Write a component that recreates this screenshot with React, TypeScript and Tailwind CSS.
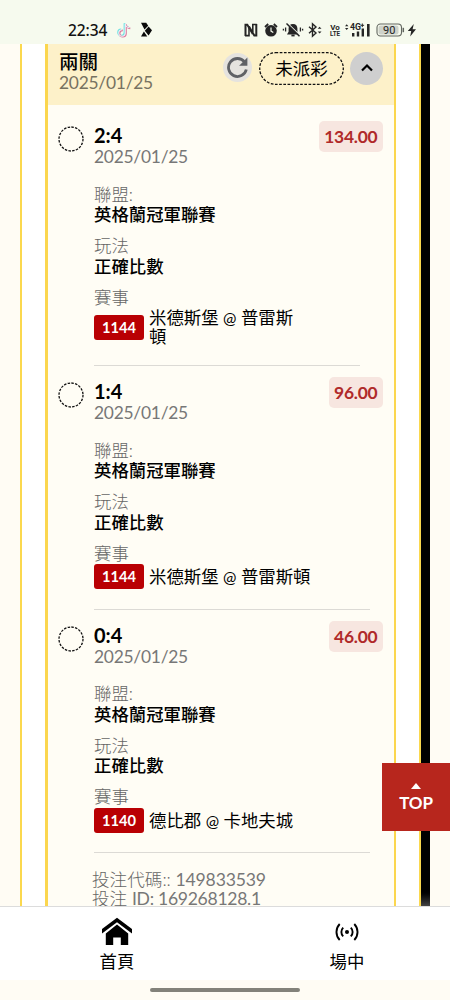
type Leg = {
  score: string;
  date: string;
  odds: string;
  league: string;
  play: string;
  matchId: string;
  home: string;
  away: string;
  wrap?: boolean;
};

const LEGS: Leg[] = [
  { score: "2:4", date: "2025/01/25", odds: "134.00", league: "英格蘭冠軍聯賽", play: "正確比數", matchId: "1144", home: "米德斯堡", away: "普雷斯頓", wrap: true },
  { score: "1:4", date: "2025/01/25", odds: "96.00", league: "英格蘭冠軍聯賽", play: "正確比數", matchId: "1144", home: "米德斯堡", away: "普雷斯頓" },
  { score: "0:4", date: "2025/01/25", odds: "46.00", league: "英格蘭冠軍聯賽", play: "正確比數", matchId: "1140", home: "德比郡", away: "卡地夫城" },
];

/** System bar: clock, running apps, radios, battery. */
function StatusBar() {
  return (
    <header className="flex h-11 shrink-0 items-start bg-[#f6faee] pt-[22px] text-[#111]">
      <span className="ml-[68px] w-[40px] font-['Noto_Sans'] text-[15.5px] leading-4 font-medium tracking-[-0.1px]">22:34</span>
      <svg className="ml-[9px]" width="15" height="16" viewBox="0 0 15 16" fill="none" strokeWidth="1.6">
        <path d="M7.4 1.2v9.2a3.200 3.200 0 1 1-3.200-3.200M7.400 1.200c.3 2.500 1.900 3.800 4.300 4" stroke="#6fe3e3" />
        <path d="M9 2.400v9.200a3.200 3.200 0 1 1-3.200-3.200M9 2.400c.3 2.500 1.900 3.800 4.300 4" stroke="#d9799c" />
        <path d="M8.200 1.800V11A3.200 3.200 0 1 1 5 7.800M8.200 1.800c.3 2.500 1.900 3.800 4.300 4" stroke="#f3eef6" strokeWidth="1.100" />
      </svg>
      <svg className="ml-[8px]" width="13" height="16" viewBox="0 0 13 16" fill="#0a0a0a">
        <path d="M1 .8h5.200l2 3-3.700 3.700zM8.600 4.400l3.400 3.800-3.400 5.400-3.800-4.800zM3.900 9.600l3.400 5H1z" />
      </svg>

      <div className="ml-[91px] flex items-start">
        <svg width="14" height="16" viewBox="0 0 14 16" fill="none" stroke="#252525" strokeWidth="2">
          <path d="M1.500 14V2.8h1.8L8.800 12M12.300 2v11.400h-2L5 4.600" />
          <path d="M1 13.600h4V6M8.800 10V2.500h4" strokeWidth="1.600" />
        </svg>
        <svg className="ml-[6px]" width="14" height="16" viewBox="0 0 14 16" fill="#252525">
          <circle cx="7" cy="8.800" r="5.800" />
          <path d="M1 5 4.200 2M13 5 9.800 2" stroke="#252525" strokeWidth="1.800" />
          <path d="M7 5.600v3.500l2.300 1.500" fill="none" stroke="#f6faee" strokeWidth="1.200" />
        </svg>
        <svg className="ml-[4px]" width="22" height="16" viewBox="0 0 22 16" fill="#252525">
          <path d="M11 2c-3 0-4.400 2-4.400 4.600v3.200L5 12.400h12l-1.600-2.600V6.600C15.400 4 14 2 11 2z" />
          <path d="M9.400 12.600h3.200v1.800H9.400z" />
          <path d="m5.700 1.500 13 12.500" stroke="#f6faee" strokeWidth="1.200" />
          <path d="m4.500 1.500 13 12.800" stroke="#252525" strokeWidth="1.500" />
          <path d="M3.600 5.500v4M1.400 6.800v1.600M18.400 5.500v4M20.600 6.800v1.600" stroke="#252525" strokeWidth="1.300" />
        </svg>
        <svg className="ml-[4px]" width="14" height="16" viewBox="0 0 14 16" fill="none" stroke="#252525" strokeWidth="1.400">
          <path d="m1 4.800 7 6.200-3.500 3.200V1.800L8 5 1 11.200" />
          <path d="m9.700 6.800 1.900-2.100 1.900 2.100zM9.700 9.400l1.900 2.100 1.900-2.100z" fill="#252525" stroke="none" />
        </svg>
        <svg className="ml-[7px]" width="12" height="16" viewBox="0 0 12 16" fill="#252525" fontFamily="Roboto" fontWeight="700" textAnchor="middle">
          <text x="6" y="7.600" fontSize="8">Vo</text>
          <text x="6" y="14.400" fontSize="8" textLength="10" lengthAdjust="spacingAndGlyphs">LTE</text>
        </svg>
        <svg className="ml-[4px]" width="27" height="16" viewBox="0 0 27 16" fill="#252525">
          <path d="m0 4.300 1.700-2 1.700 2zM0 6l1.700 2 1.700-2z" />
          <text x="5" y="8.200" fontFamily="Roboto" fontSize="9" fontWeight="700" textLength="11" lengthAdjust="spacingAndGlyphs">4G</text>
          <path d="M15.500 3.300h3.600M17.300 1.500v3.600" stroke="#252525" />
          <path d="M7 11h2.400v3.500H7zM11.800 9.500h2.400v5h-2.400zM16.600 6.500H19v8h-2.400zM22 2h2.600v12.500H22z" />
        </svg>
        <svg className="ml-[4px]" width="29" height="16" viewBox="0 0 29 16">
          <rect x="1" y="2" width="24.500" height="12" rx="3.500" fill="#f6faee" stroke="#626660" strokeWidth="1.100" />
          <rect x="2.500" y="3.500" width="20" height="9" rx="2.200" fill="#ced2ca" />
          <path d="M27.300 5.800v4.400" stroke="#626660" strokeWidth="1.500" />
          <text x="13.300" y="12" textAnchor="middle" fontFamily="Roboto" fontSize="11" fill="#252525">90</text>
        </svg>
        <svg className="ml-[2px]" width="10" height="16" viewBox="0 0 10 16" fill="#252525">
          <path d="M6.800 2 .8 9h3.400l-1 5.500L9 7.300H5.600z" />
        </svg>
      </div>
    </header>
  );
}

function BetHeader() {
  return (
    <div className="flex h-[61px] shrink-0 bg-[#fdf1c9] pl-[11px] pt-2">
      <div className="w-[164px]">
        <h1 className="text-[19.500px] leading-[20px] font-medium">兩關</h1>
        <p className="text-[17.400px] leading-[22px] tracking-[-0.250px] text-[#777261]">2025/01/25</p>
      </div>
      <button className="mt-[1px] flex size-[29px] items-center justify-center rounded-full bg-[#e5e3df]">
        <svg width="23" height="23" viewBox="0 0 23 23" fill="none">
          <path d="M18.500 5.800A9 9 0 1 0 20.300 13.500" stroke="#5f6166" strokeWidth="2.800" />
          <path d="M21.400 1.500v8.300h-8.300z" fill="#5f6166" />
        </svg>
      </button>
      <span className="relative ml-[7px] flex h-[33px] w-[85px] items-center justify-center text-[17.500px] leading-none">
        <svg className="absolute inset-0" width="85" height="33" fill="none">
          <rect x=".7" y=".7" width="83.600" height="31.600" rx="15.800" stroke="#111" strokeWidth="1.300" strokeDasharray="2.700 1.500" />
        </svg>
        未派彩
      </span>
      <button className="ml-[6px] flex size-[33px] items-center justify-center rounded-full bg-[#cfcfcf]">
        <svg className="-mt-0.5" width="14" height="10" viewBox="0 0 14 10" fill="none">
          <path d="m2 7.500 5-5 5 5" stroke="#000" strokeWidth="2.200" />
        </svg>
      </button>
    </div>
  );
}

function LegItem({ leg }: { leg: Leg }) {
  return (
    <article className={leg.wrap ? "flex h-[256px]" : "flex h-[243.500px]"}>
      <svg className="mt-[5px] ml-[10px] shrink-0" width="26" height="26" viewBox="0 0 26 26" fill="none">
        <circle cx="13" cy="13" r="12" stroke="#111" strokeWidth="1.300" strokeDasharray="2.500 1.270" />
      </svg>
      <div className="ml-[10px] flex min-w-0 flex-1 flex-col text-[17.400px] leading-[20.500px]">
        <div className="flex h-[46px] justify-between pr-[11px]">
          <div className="pt-[4px]">
            <h2 className="text-[20px] leading-[21px] font-bold">{leg.score}</h2>
            <p className="leading-[21px] tracking-[-0.250px] text-[#777]">{leg.date}</p>
          </div>
          <span className="h-[31px] rounded-[5px] bg-[#f7e6e0] px-[5.500px] text-[17.400px] leading-[31px] font-bold tracking-[-0.200px] text-[#b02a2a]">
            {leg.odds}
          </span>
        </div>
        <dl className="mt-[17.500px]">
          <dt className="font-light text-[#666]">聯盟:</dt>
          <dd className="font-medium">{leg.league}</dd>
          <dt className="mt-[10.500px] font-light text-[#666]">玩法</dt>
          <dd className="font-medium">{leg.play}</dd>
          <dt className="mt-[10.500px] font-light text-[#666]">賽事</dt>
          <dd className="flex items-center">
            <span className="h-[25px] w-[50px] rounded-[3px] bg-[#b90003] text-center text-[14.700px] leading-[25px] font-bold text-white">
              {leg.matchId}
            </span>
            <span className={leg.wrap ? "ml-[5px] w-[150px] leading-[19px]" : "ml-[5px] leading-[19px]"}>
              {leg.home} <span className="text-[16px]">@</span> {leg.away}
            </span>
          </dd>
        </dl>
        <hr className={leg.wrap ? "mt-[18.500px] w-[266px] border-[#dcdad5]" : "mt-[19.500px] w-[276px] border-[#dcdad5]"} />
      </div>
    </article>
  );
}

function BottomNav() {
  return (
    <nav className="h-[74px] shrink-0 overflow-hidden border-t border-[#dcdcdc] bg-white">
      <div className="grid w-[460px] grid-cols-[234px_226px] text-center text-[17.400px] leading-5">
        <a className="flex flex-col items-center pt-[10px]">
          <svg width="32" height="30" viewBox="0 0 32 30" fill="#000">
            <path d="M16 .8 31 12v4.500L16 5.200 1 16.500V12z" />
            <path d="M16 7.600 27.200 16.400V28h-7.400v-7.600h-7.600V28H4.800V16.400z" />
          </svg>
          <span className="mt-[5px]">首頁</span>
        </a>
        <a className="flex flex-col items-center pt-[10px]">
          <svg width="26" height="30" viewBox="0 0 26 30" fill="none" stroke="#000" strokeWidth="1.900">
            <circle cx="13" cy="15" r="2" fill="#000" stroke="none" />
            <path d="M9.200 10.600a6.200 6.200 0 0 0 0 8.800M16.800 10.600a6.200 6.200 0 0 1 0 8.800" />
            <path d="M5.700 7a11.500 11.500 0 0 0 0 16M20.300 7a11.500 11.500 0 0 1 0 16" />
          </svg>
          <span className="mt-[5px]">場中</span>
        </a>
      </div>
    </nav>
  );
}

export default function App() {
  return (
    <div className="relative flex h-[1000px] w-[450px] flex-col overflow-hidden bg-[#fffcf4] font-[Lato,'Noto_Sans_CJK_TC',sans-serif] text-black">
      <StatusBar />
      <main className="flex h-[862px] shrink-0 overflow-hidden">
        <div className="w-5 shrink-0" />
        <div className="flex w-[401px] shrink-0 border-x-2 border-[#fbd84e] bg-white px-[23px]">
          <section className="flex w-[351px] shrink-0 flex-col border-r-2 border-l-3 border-[#fbd64e] bg-[#fffdf5]">
            <BetHeader />
            <div className="mt-4 shrink-0">
              {LEGS.map((leg) => (
                <LegItem key={leg.score} leg={leg} />
              ))}
            </div>
            <div className="mt-1.5 ml-[44px] text-[17.600px] leading-[19px] font-light text-[#666]">
              <p>
                投注代碼:: <span className="font-normal tracking-[-0.200px] text-[#777]">149833539</span>
              </p>
              <p>
                投注 <span className="font-normal tracking-[-0.300px] text-[#777]">ID: 169268128.1</span>
              </p>
            </div>
          </section>
        </div>
        <div className="w-[9px] shrink-0 bg-linear-to-b from-black from-98% to-[#444]" />
      </main>
      <BottomNav />
      <div className="flex h-5 items-center justify-center">
        <span className="mb-px h-[4px] w-[150px] rounded-full bg-[#83827a]" />
      </div>

      {/* floating back-to-top */}
      <button className="absolute top-[763px] right-0 flex h-[68px] w-[68px] flex-col items-center bg-[#b7261d] pt-5 text-[17px] leading-5 font-bold tracking-[-0.200px] text-white">
        <svg width="10" height="6" viewBox="0 0 10 6" fill="#fff">
          <path d="M5 0 10 6H0z" />
        </svg>
        <span className="mt-[4px]">TOP</span>
      </button>
    </div>
  );
}
